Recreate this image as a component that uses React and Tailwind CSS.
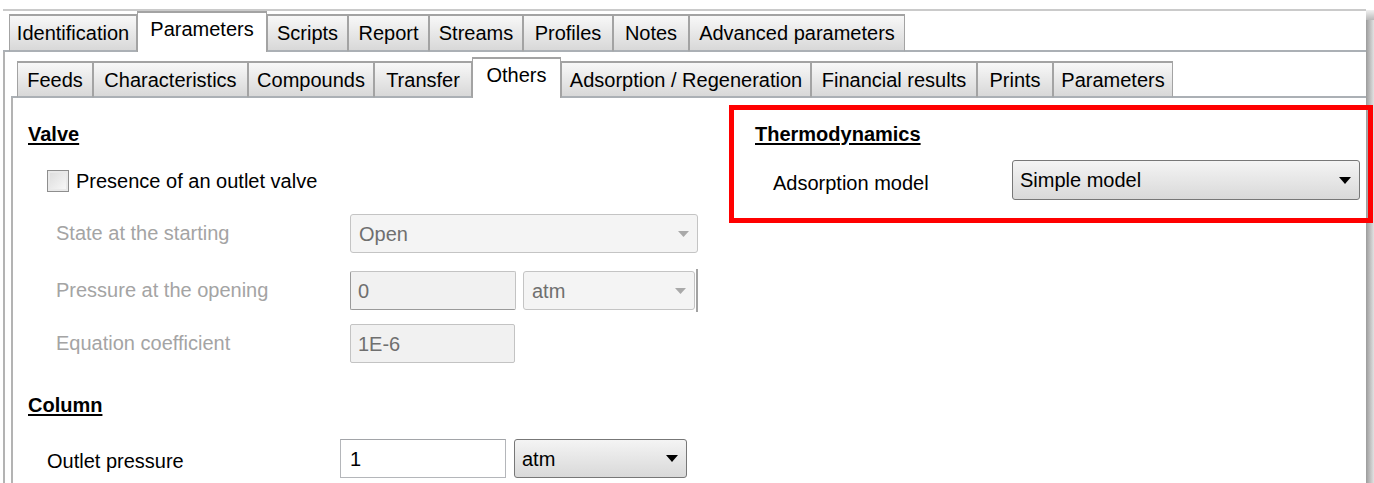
import React from "react";

const OUTER_TABS = [
  { label: "Identification", w: "w-[128px]" },
  { label: "Parameters", w: "w-[130px]", active: true },
  { label: "Scripts", w: "w-[81px]" },
  { label: "Report", w: "w-[81px]" },
  { label: "Streams", w: "w-[94px]" },
  { label: "Profiles", w: "w-[90px]" },
  { label: "Notes", w: "w-[76px]" },
  { label: "Advanced parameters", w: "w-[216px]" },
];

const INNER_TABS = [
  { label: "Feeds", w: "w-[76px]" },
  { label: "Characteristics", w: "w-[155px]" },
  { label: "Compounds", w: "w-[126px]" },
  { label: "Transfer", w: "w-[98px]" },
  { label: "Others", w: "w-[89px]", active: true },
  { label: "Adsorption / Regeneration", w: "w-[250px]" },
  { label: "Financial results", w: "w-[166px]" },
  { label: "Prints", w: "w-[76px]" },
  { label: "Parameters", w: "w-[120px]" },
];

function Tab({ label, w, active, inner }) {
  if (active) {
    return (
      <div
        className={`${w} h-[41px] pt-[5px] flex justify-center whitespace-nowrap leading-[23px] bg-white border-t-2 border-x border-[#a3a3a3]`}
      >
        {label}
      </div>
    );
  }
  return (
    <div
      className={`${w} ${inner ? "h-[37px]" : "h-[38px]"} pt-[6px] flex justify-center whitespace-nowrap leading-[23px] bg-linear-to-b from-[#f8f8f8] to-[#d8d8d8] border-t-2 border-x border-x-[#a3a3a3] border-t-[#a3a3a3] border-b-2 border-b-[#abb0b5]`}
    >
      {label}
    </div>
  );
}

function Arrow({ color, w = 12, h = 6 }) {
  return (
    <svg width={w} height={h} viewBox={`0 0 ${w} ${h}`} className="shrink-0">
      <polygon points={`0,0 ${w},0 ${w / 2},${h}`} fill={color} />
    </svg>
  );
}

function DisabledSelect({ value, className }) {
  return (
    <div
      className={`${className} h-full flex items-center justify-between pl-[8px] pr-[8px] bg-[#f4f4f4] border border-[#c4c4c4] rounded-[3px] text-[#6f6f6f]`}
    >
      <span>{value}</span>
      <Arrow color="#a9a9a9" w={11} h={6} />
    </div>
  );
}

function DisabledInput({ value, className }) {
  return (
    <div
      className={`${className} h-full flex items-center pl-[7px] bg-[#f1f1f1] border border-[#c3c3c3] rounded-[2px] text-[#6f6f6f]`}
    >
      {value}
    </div>
  );
}

function ComboBox({ value, className }) {
  return (
    <div
      className={`${className} h-full flex items-center justify-between pl-[7px] pr-[8px] bg-linear-to-b from-[#f4f4f4] to-[#d9d9d9] border border-[#777777] rounded-[3px] text-black`}
    >
      <span>{value}</span>
      <Arrow color="#000000" w={12} h={7} />
    </div>
  );
}

function Heading({ children, className = "" }) {
  return (
    <div
      className={`${className} h-[23px] leading-[23px] font-bold underline decoration-2 underline-offset-[2px]`}
    >
      {children}
    </div>
  );
}

export default function App() {
  return (
    <div className="relative w-[1374px] h-[483px] bg-white overflow-hidden flex font-['Liberation_Sans',Arial,sans-serif] text-[20px] text-black">
      {/* window body */}
      <div className="w-[1366px] flex flex-col">
        <div className="h-[9px]" />
        <div className="ml-[3px] h-[2px] bg-[#cacaca]" />

        {/* main tab strip */}
        <div className="ml-[3px] h-[41px] flex items-end">
          <div className="w-[6px] self-stretch border-b-2 border-[#abb0b5]" />
          {OUTER_TABS.map((t) => (
            <Tab key={t.label} {...t} />
          ))}
          <div className="flex-1 self-stretch border-b-2 border-[#abb0b5]" />
        </div>

        {/* main tab page */}
        <div className="ml-[3px] flex-1 flex flex-col pl-[6px] border-l-2 border-[#b3b3b3]">
          {/* sub tab strip */}
          <div className="h-[46px] flex items-end">
            <div className="w-[6px] self-stretch border-b-2 border-[#abb0b5]" />
            {INNER_TABS.map((t) => (
              <Tab key={t.label} {...t} inner />
            ))}
            <div className="flex-1 self-stretch border-b-2 border-[#abb0b5]" />
          </div>

          {/* sub tab page */}
          <div className="flex-1 flex border-l-2 border-[#b3b3b3]">
            {/* left column */}
            <div className="w-[742px] flex flex-col pt-[25px]">
              <Heading className="ml-[15px] w-fit">Valve</Heading>

              <div className="mt-[23px] h-[24px] pl-[34px] flex items-center">
                <div className="w-[22px] h-[22px] p-[2px] border border-[#8e8e8e] bg-[#e9e9e9]">
                  <div className="w-full h-full bg-linear-to-br from-[#dedede] to-[#f7f7f7]" />
                </div>
                <span className="ml-[7px] leading-[23px]">Presence of an outlet valve</span>
              </div>

              <div className="mt-[21px] h-[39px] pl-[43px] flex items-center">
                <div className="w-[294px] text-[#a4a4a4] leading-[23px]">State at the starting</div>
                <DisabledSelect value="Open" className="w-[348px]" />
              </div>

              <div className="mt-[18px] h-[39px] pl-[43px] flex items-center">
                <div className="w-[294px] text-[#a4a4a4] leading-[23px]">Pressure at the opening</div>
                <DisabledInput
                  value="0"
                  className="w-[166px] border-l-[#9a9a9a] border-b-[#9a9a9a]"
                />
                <DisabledSelect value="atm" className="ml-[7px] w-[172px]" />
                <div className="ml-[1px] w-[2px] h-[43px] bg-[#a2a2a2]" />
              </div>

              <div className="mt-[14px] h-[39px] pl-[43px] flex items-center">
                <div className="w-[294px] text-[#a4a4a4] leading-[23px]">Equation coefficient</div>
                <DisabledInput value="1E-6" className="w-[165px]" />
              </div>

              <Heading className="mt-[31px] ml-[15px] w-fit">Column</Heading>

              <div className="mt-[22px] h-[39px] pl-[34px] flex items-center">
                <div className="w-[293px] pt-[6px] leading-[23px]">Outlet pressure</div>
                <div className="w-[166px] h-full flex items-center pl-[9px] bg-white border border-[#b4b6ba] border-t-[#a2a4a8]">
                  1
                </div>
                <ComboBox value="atm" className="ml-[8px] w-[173px]" />
              </div>
            </div>

            {/* right column */}
            <div className="flex-1 flex flex-col pt-[25px]">
              <Heading className="w-fit">Thermodynamics</Heading>
              <div className="mt-[14px] h-[40px] pl-[18px] flex items-center">
                <div className="w-[239px] pt-[6px] leading-[23px]">Adsorption model</div>
                <ComboBox value="Simple model" className="w-[348px]" />
              </div>
            </div>
          </div>
        </div>
      </div>

      {/* window shadow on the right edge */}
      <div className="w-[8px] flex flex-col">
        <div className="h-[10px]" />
        <div className="h-[10px] bg-linear-to-b from-[#f2f2f2] to-[#b9b9b9]" />
        <div className="flex-1 bg-linear-to-r from-[#9c9c9c] to-[#e2e2e2]" />
      </div>

      {/* highlight frame around the thermodynamics group */}
      <div className="absolute left-[729px] top-[105px] w-[644px] h-[118px] border-[5px] border-[#ff0000]" />
    </div>
  );
}
